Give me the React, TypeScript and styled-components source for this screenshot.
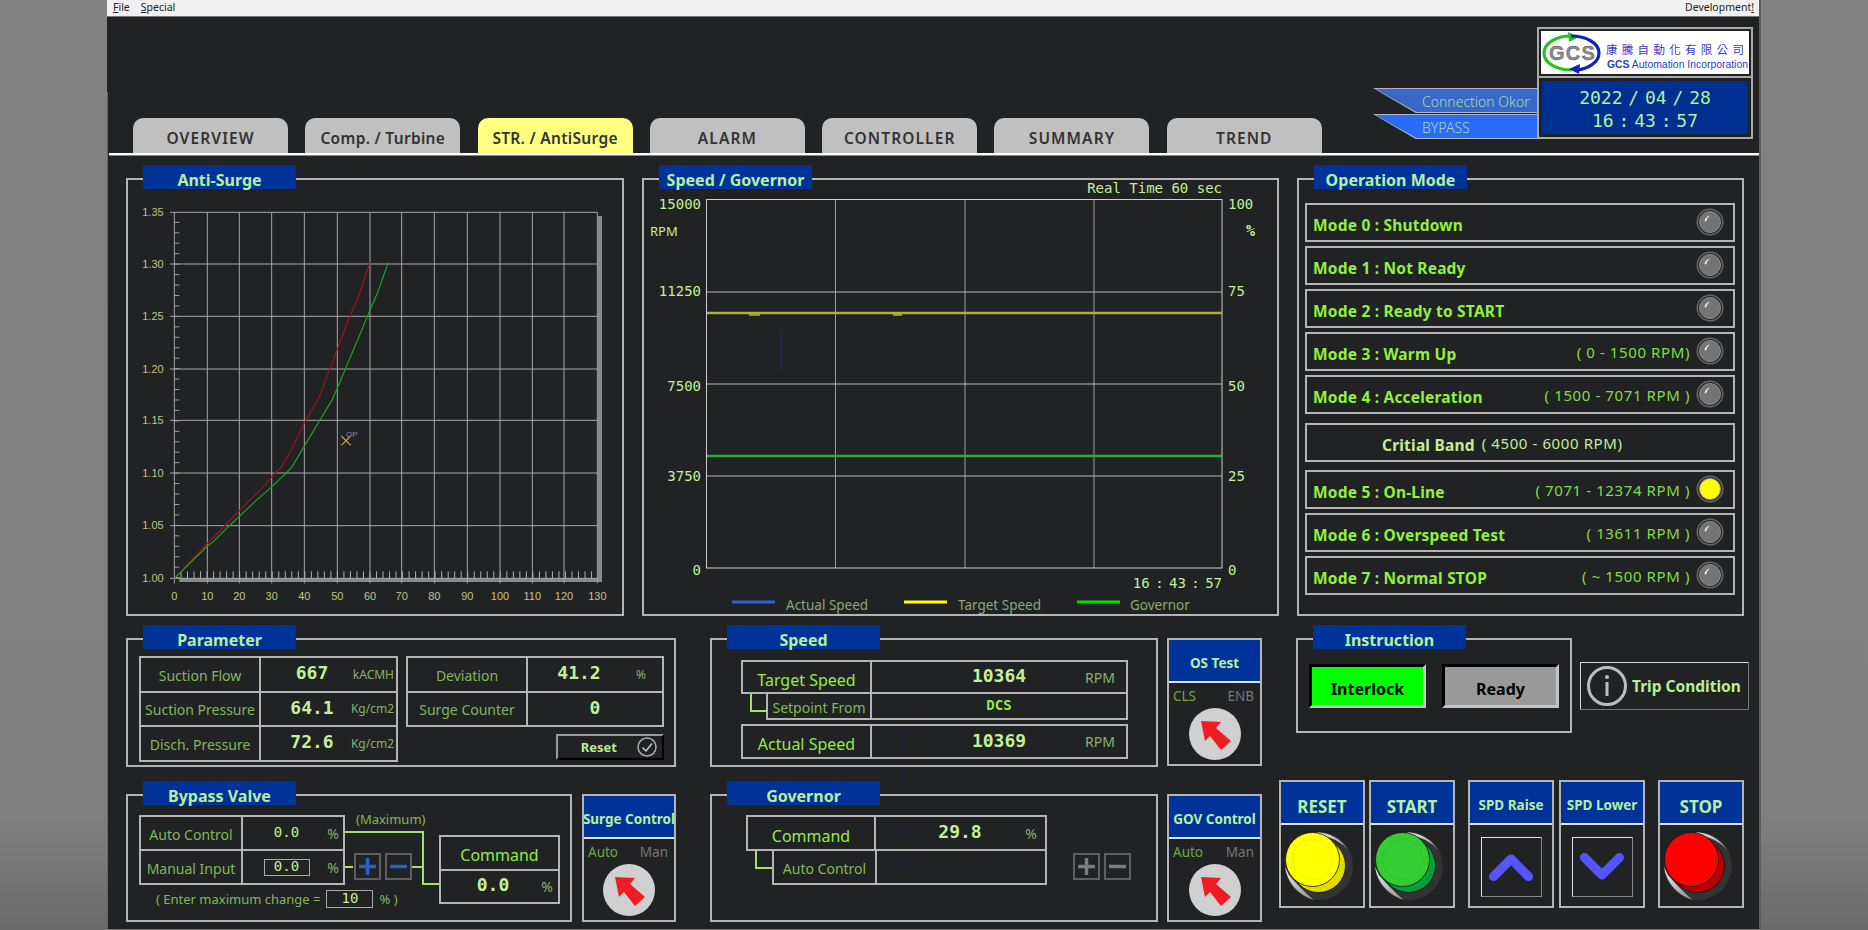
import React from "react";
import styled, { createGlobalStyle } from "styled-components";

const SANS = `"Noto Sans", "Open Sans", sans-serif`;
const MONO = `"DejaVu Sans Mono", "Liberation Mono", monospace`;
const BG = "#212224";
const LINE = "#b4b4b4";
const NAVY = "#003399";

const Global = createGlobalStyle`
  html, body { margin: 0; padding: 0; height: 930px; overflow: hidden; }
  body { background: linear-gradient(#828282 0, #808080 88%, #6a6a6a 100%); font-family: ${SANS}; }
  #root { height: 930px; }
`;

const Frame = styled.div`
  position: relative;
  width: 1654px;
  height: 930px;
  margin-left: 107px;
  background: ${BG};
  display: flex;
  flex-direction: column;
  box-sizing: border-box;
  border-right: 2px solid #5c5c5c;
  border-bottom: 1px solid #777;
  &::before {
    content: "";
    position: absolute;
    left: 0;
    top: 92px;
    bottom: 0;
    width: 1px;
    background: #666;
  }
`;
const Menu = styled.div`
  background: #f0f0f0;
  border-bottom: 1px solid #777;
  display: flex;
  align-items: center;
  padding: 0 5px 2px 6px;
  box-sizing: content-box;
  height: 14px;
  gap: 11px;
  font-size: 10.5px;
  color: #222;
`;
const MenuEnd = styled.span`
  margin-left: auto;
`;
const Header = styled.div`
  height: 136px;
  display: flex;
  justify-content: space-between;
  align-items: flex-end;
`;
const Tabs = styled.div`
  display: flex;
  gap: 17.3px;
  padding-left: 26px;
`;
const Tab = styled.div<{ $active?: boolean; $caps?: boolean }>`
  width: 155px;
  height: 35px;
  box-sizing: border-box;
  padding-top: 9px;
  text-align: center;
  background: ${(p) => (p.$active ? "#ffff80" : "#c0c0c0")};
  border-radius: 10px 10px 0 0;
  color: #333;
  font-size: 15.5px;
  line-height: 22px;
  font-weight: 600;
  letter-spacing: ${(p) => (p.$caps ? "1.1px" : "0.3px")};
`;
const HeaderRight = styled.div`
  display: flex;
  align-items: flex-end;
  padding: 0 6px 14px 0;
`;
const Ribbons = styled.div`
  display: flex;
  flex-direction: column;
  gap: 1px;
`;
const RibbonEdge = styled.div`
  width: 164px;
  height: 25px;
  padding: 1px 0 1px 1px;
  box-sizing: border-box;
  background: #aeb4c0;
  clip-path: polygon(0 0, 100% 0, 100% 100%, 26% 100%);
`;
const RibbonFill = styled.div<{ $color: string }>`
  height: 100%;
  background: ${(p) => p.$color};
  clip-path: polygon(1% 0, 100% 0, 100% 100%, 26% 100%);
  padding-left: 48px;
  box-sizing: border-box;
  color: #a8dca8;
  font-size: 14px;
  line-height: 25px;
  font-weight: 300;
`;
const ClockStack = styled.div`
  width: 216px;
  display: flex;
  flex-direction: column;
`;
const LogoBox = styled.div`
  height: 51px;
  box-sizing: border-box;
  border: 2px solid #aaa;
  padding: 2px;
  display: flex;
`;
const DateBox = styled.div`
  height: 61px;
  box-sizing: border-box;
  border: 2px solid #aaa;
  border-top: none;
  padding: 3px 3px 3px;
  display: flex;
`;
const DateFill = styled.div`
  flex: 1;
  background: #002f92;
  color: #b4f0a0;
  font-family: ${MONO};
  font-size: 18px;
  line-height: 23px;
  text-align: center;
  padding-top: 5px;
`;
const DateLine = styled.div<{ $ws: number }>`
  word-spacing: ${(p) => p.$ws}px;
`;
const Rule = styled.div`
  height: 2px;
  margin-left: 2px;
  background: #fff;
  border-bottom: 1px solid #888;
`;
const Content = styled.div`
  padding: 22px 0 0 19px;
  display: flex;
  flex-direction: column;
  gap: 22px;
`;
const TopRow = styled.div`
  display: flex;
  gap: 18px;
`;
const Panel = styled.div<{ $w: number; $h: number }>`
  position: relative;
  width: ${(p) => p.$w}px;
  height: ${(p) => p.$h}px;
  box-sizing: border-box;
  border: 2px solid ${LINE};
  flex: none;
`;
const PanelTitle = styled.div`
  position: absolute;
  left: 15px;
  top: -15px;
  width: 153px;
  height: 24px;
  box-sizing: border-box;
  padding-top: 1px;
  background: ${NAVY};
  color: #b4f0a0;
  font-size: 16px;
  line-height: 28px;
  font-weight: 700;
  text-align: center;
`;
const Chart = styled.svg`
  display: block;
`;
const ModeList = styled.div`
  padding: 23px 0 0 6px;
  display: flex;
  flex-direction: column;
  gap: 4px;
`;
const ModeRow = styled.div<{ $gap?: boolean }>`
  width: 430px;
  height: 39px;
  box-sizing: border-box;
  border: 2px solid ${LINE};
  margin: ${(p) => (p.$gap ? "5px 0 4px" : "0")};
  display: flex;
  align-items: center;
  padding: 0 9px 0 6px;
`;
const ModeLabel = styled.span<{ $pad?: number; $pale?: boolean }>`
  font-size: 15.5px;
  font-weight: 700;
  color: ${(p) => (p.$pale ? "#c4ec98" : "#92f040")};
  padding: 4px 0 0 ${(p) => p.$pad ?? 0}px;
  letter-spacing: 0.2px;
  white-space: nowrap;
`;
const ModeRange = styled.span<{ $pale?: boolean; $left?: boolean }>`
  margin-left: ${(p) => (p.$left ? "7px" : "auto")};
  margin-right: ${(p) => (p.$left ? "0" : "6px")};
  font-size: 15px;
  letter-spacing: 0.6px;
  color: ${(p) => (p.$pale ? "#c4ec98" : "#84dc44")};
  white-space: nowrap;
`;
const LedSlot = styled.svg<{ $end?: boolean }>`
  flex: none;
  margin-left: ${(p) => (p.$end ? "auto" : "0")};
  margin-top: -1px;
`;
const Lower = styled.div`
  display: flex;
`;
const Column = styled.div<{ $w: number; $gap: number; $ml: number }>`
  width: ${(p) => p.$w}px;
  margin-left: ${(p) => p.$ml}px;
  display: flex;
  flex-direction: column;
  gap: ${(p) => p.$gap}px;
  flex: none;
`;
const Split = styled.div<{ $gap: number }>`
  display: flex;
  align-items: flex-start;
  gap: ${(p) => p.$gap}px;
`;
const ParamBody = styled.div`
  display: flex;
  gap: 8px;
  padding: 16px 0 0 11px;
`;
const ParamRight = styled.div`
  display: flex;
  flex-direction: column;
`;
const Grid = styled.div<{ $cols: string; $w: number; $rowH: number; $indent?: number }>`
  display: grid;
  grid-template-columns: ${(p) => p.$cols};
  grid-auto-rows: ${(p) => p.$rowH}px;
  gap: 2px;
  padding: 2px;
  background: ${LINE};
  width: ${(p) => p.$w}px;
  margin-left: ${(p) => p.$indent ?? 0}px;
  box-sizing: border-box;
`;
const LabelCell = styled.div<{ $size?: number; $bright?: boolean }>`
  background: ${BG};
  display: flex;
  align-items: center;
  justify-content: center;
  padding-top: ${(p) => (p.$bright ? 5 : 2)}px;
  box-sizing: border-box;
  font-size: ${(p) => p.$size ?? 14}px;
  color: ${(p) => (p.$bright ? "#92ec48" : "#86b65a")};
  white-space: nowrap;
`;
const ValueCell = styled.div<{ $vw: number }>`
  background: ${BG};
  display: grid;
  grid-template-columns: 1fr;
  align-items: center;
  & > * {
    grid-area: 1 / 1;
  }
  & > :first-child {
    width: ${(p) => p.$vw}px;
  }
`;
const Value = styled.div<{ $size?: number; $thin?: boolean; $bright?: boolean }>`
  font-family: ${MONO};
  font-size: ${(p) => p.$size ?? 18}px;
  font-weight: ${(p) => (p.$thin ? 400 : 700)};
  color: ${(p) => (p.$bright ? "#92ec48" : "#c4f098")};
  text-align: center;
  margin-top: -3px;
`;
const Unit = styled.div<{ $pr?: number; $size?: number }>`
  justify-self: end;
  padding-right: ${(p) => p.$pr ?? 2}px;
  font-size: ${(p) => p.$size ?? 12}px;
  color: #8ab070;
  white-space: nowrap;
`;
const ResetButton = styled.div`
  align-self: flex-end;
  margin-top: 7px;
  width: 108px;
  height: 26px;
  box-sizing: border-box;
  border-top: 2px solid #9a9a9a;
  border-left: 2px solid #9a9a9a;
  border-right: 2px solid #000;
  border-bottom: 2px solid #000;
  display: flex;
  align-items: center;
  justify-content: flex-end;
  gap: 20px;
  padding-right: 5px;
  color: #b8ec98;
  font-size: 13px;
  font-weight: 700;
`;
const BypassBody = styled.div`
  display: flex;
  padding: 19px 0 0 11px;
`;
const BypassLeft = styled.div`
  width: 206px;
  flex: none;
`;
const EnterLine = styled.div`
  display: flex;
  align-items: center;
  gap: 6px;
  margin: 5px 0 0 17px;
  font-size: 13px;
  color: #86b65a;
  white-space: nowrap;
`;
const InputBox = styled.div<{ $w: number; $h: number }>`
  flex: none;
  width: ${(p) => p.$w}px;
  height: ${(p) => p.$h}px;
  box-sizing: border-box;
  border: 1px solid #aaa;
  font-family: ${MONO};
  font-size: 14px;
  line-height: ${(p) => p.$h - 4}px;
  color: #c4f098;
  text-align: center;
`;
const BoxCell = styled.div`
  display: flex;
  justify-content: center;
`;
const WireArea = styled.div`
  position: relative;
  width: 94px;
  height: 70px;
  flex: none;
`;
const Wires = styled.svg`
  position: absolute;
  left: 0;
  top: 0;
`;
const MaxLabel = styled.div`
  position: relative;
  margin: -4px 0 0 11px;
  height: 17px;
  font-size: 13px;
  line-height: 17px;
  color: #86b65a;
`;
const PmRow = styled.div<{ $flow?: boolean }>`
  position: relative;
  display: flex;
  gap: 4px;
  margin: ${(p) => (p.$flow ? "38px 0 0 26px" : "25px 0 0 8.5px")};
`;
const PmBox = styled.div`
  width: 27px;
  height: 27px;
  box-sizing: border-box;
  border: 2px solid #5f5f5f;
  display: flex;
  align-items: center;
  justify-content: center;
`;
const CommandWrap = styled.div`
  margin-top: 20px;
`;
const SpeedBody = styled.div`
  padding: 20px 0 0 29px;
`;
const Indented = styled.div`
  position: relative;
  margin-top: -2px;
  &::before {
    content: "";
    position: absolute;
    left: 9px;
    top: 2px;
    width: 15px;
    height: 16px;
    border-left: 2px solid #a4e070;
    border-bottom: 2px solid #a4e070;
  }
`;
const Spaced = styled.div`
  margin-top: 4px;
`;
const GovBody = styled.div`
  display: flex;
  padding: 19px 0 0 34px;
`;
const Selector = styled.div<{ $w: number }>`
  width: ${(p) => p.$w}px;
  height: 128px;
  box-sizing: border-box;
  border: 2px solid ${LINE};
  flex: none;
  display: flex;
  flex-direction: column;
`;
const SelectorHead = styled.div<{ $size?: number }>`
  height: 43px;
  flex: none;
  box-sizing: border-box;
  background: ${NAVY};
  border-bottom: 2px solid #dfe6f0;
  color: #b4f0a0;
  font-size: ${(p) => p.$size ?? 13.5}px;
  font-weight: 700;
  display: flex;
  align-items: center;
  justify-content: center;
  white-space: nowrap;
  padding-top: 4px;
`;
const ActionHead = styled(SelectorHead)`
  padding-top: 7px;
`;
const SelectorSides = styled.div`
  display: flex;
  justify-content: space-between;
  padding: 4px 6px 0 4px;
  font-size: 13.5px;
  line-height: 18px;
`;
const SideOn = styled.span`
  color: #6ea83e;
`;
const SideOff = styled.span`
  color: #777;
`;
const KnobWrap = styled.div`
  display: flex;
  justify-content: center;
  margin-top: 3px;
`;
const InstructionRow = styled.div`
  display: flex;
  align-items: flex-start;
  margin-left: 17px;
`;
const InstructionBody = styled.div`
  display: flex;
  gap: 16px;
  padding: 24px 0 0 11px;
`;
const Lamp = styled.div<{ $color: string }>`
  width: 117px;
  height: 44px;
  box-sizing: border-box;
  background: ${(p) => p.$color};
  border-top: 3px solid #000;
  border-left: 3px solid #000;
  border-right: 3px solid #c4c4c4;
  border-bottom: 3px solid #c4c4c4;
  color: #000;
  font-size: 16px;
  font-weight: 700;
  text-align: center;
  line-height: 44px;
`;
const Trip = styled.div`
  margin: 24px 0 0 8px;
  width: 169px;
  height: 48px;
  box-sizing: border-box;
  border: 1px solid;
  border-color: #d8d8d8 #777 #777 #d8d8d8;
  display: flex;
  align-items: center;
  gap: 5px;
  padding-left: 6px;
  color: #b8f090;
  font-size: 15.5px;
  font-weight: 700;
  white-space: nowrap;
`;
const ButtonRow = styled.div`
  display: flex;
  margin-top: -1px;
`;
const ActionBox = styled.div<{ $ml: number }>`
  width: 86px;
  height: 128px;
  box-sizing: border-box;
  border: 2px solid ${LINE};
  margin-left: ${(p) => p.$ml}px;
  flex: none;
  display: flex;
  flex-direction: column;
`;
const ArrowWrap = styled.div`
  display: flex;
  justify-content: center;
  padding-top: 12px;
`;
const ArrowFrame = styled.div`
  width: 61px;
  height: 60px;
  box-sizing: border-box;
  border: 1px solid;
  border-color: #e4e4e4 #888 #888 #e4e4e4;
  display: flex;
  align-items: center;
  justify-content: center;
`;
const Trace = styled.svg`
  position: absolute;
  left: 797px;
  top: 700px;
  pointer-events: none;
`;

const SURGE_X = [163, 262, 358, 455, 553, 652, 750, 845, 943, 1042, 1140, 1237, 1332, 1432];
const SURGE_Y = [157, 312, 469, 627, 781, 939, 1097, 1255];
const RED = "163,1255 262,1150 285,1128 360,1050 440,970 455,950 485,920 515,868 552,790 575,752 598,710 630,625 652,568 685,480 715,410 750,307";
const GREEN = "163,1255 262,1158 280,1145 325,1100 405,1025 450,985 498,940 515,922 552,860 600,780 635,722 652,685 685,605 715,535 750,450 772,400 805,307";

function SurgeChart() {
  const leftTicks: number[] = [];
  for (let y = 187; y < 1255; y += 31.35) leftTicks.push(y);
  const baseTicks: number[] = [];
  for (let x = 183; x < 1432; x += 19.55) baseTicks.push(x);
  const yLabels = ["1.35", "1.30", "1.25", "1.20", "1.15", "1.10", "1.05", "1.00"];
  const labelStyle = { fontFamily: "Liberation Sans, sans-serif", fontSize: 33, fill: "#c2c284" };
  return (
    <Chart width={494} height={434} viewBox="24 60 1482 1302">
      <rect x={178} y={1255} width={1268} height={11} fill="#8a8a8a" />
      <rect x={1434} y={168} width={12} height={1098} fill="#8a8a8a" />
      {SURGE_X.map((x) => (
        <line key={x} x1={x} x2={x} y1={157} y2={1270} stroke="#a4a4a4" strokeWidth={3} />
      ))}
      {SURGE_Y.map((y) => (
        <line key={y} x1={150} x2={1432} y1={y} y2={y} stroke="#a8a8a8" strokeWidth={3} />
      ))}
      {leftTicks.map((y) => (
        <line key={y} x1={163} x2={178} y1={y} y2={y} stroke="#a0a0a0" strokeWidth={3} />
      ))}
      {baseTicks.map((x) => (
        <line key={x} x1={x} x2={x} y1={1234} y2={1255} stroke="#b0b0b0" strokeWidth={3} />
      ))}
      <polyline points={RED} fill="none" stroke="#a41218" strokeWidth={3.5} />
      <polyline points={GREEN} fill="none" stroke="#1fa32a" strokeWidth={3.5} />
      <path d="M664 828 L692 856 M692 828 L664 856" stroke="#c4ac38" strokeWidth={3.5} />
      <text x={678} y={832} fontFamily="Liberation Sans, sans-serif" fontSize={24} fill="#8a8fa0">OP</text>
      {yLabels.map((t, i) => (
        <text key={t} x={131} y={SURGE_Y[i] + 11} textAnchor="end" {...labelStyle}>{t}</text>
      ))}
      {SURGE_X.map((x, i) => (
        <text key={x} x={x} y={1321} textAnchor="middle" {...labelStyle}>{i * 10}</text>
      ))}
    </Chart>
  );
}

function SpeedChart() {
  const mono = { fontFamily: "DejaVu Sans Mono, monospace", fontSize: 14, fill: "#c4f098" };
  const sans = { fontFamily: "Noto Sans, sans-serif", fontSize: 13.5, fill: "#8aa87a" };
  const ys = [
    ["15000", "100", 204],
    ["11250", "75", 291],
    ["7500", "50", 386],
    ["3750", "25", 476],
    ["0", "0", 570],
  ] as const;
  return (
    <Chart width={633} height={434} viewBox="644 180 633 434">
      {[835.5, 965, 1094].map((x) => (
        <line key={x} x1={x} x2={x} y1={199} y2={568} stroke="#9c9c9c" strokeWidth={1} />
      ))}
      {[292, 384, 476].map((y) => (
        <line key={y} x1={706} x2={1222} y1={y} y2={y} stroke="#b8b8b8" strokeWidth={1} />
      ))}
      <rect x={706.5} y={199.5} width={515.5} height={368.5} fill="none" stroke="#cfcfcf" strokeWidth={1} />
      <line x1={781} x2={781} y1={331} y2={372} stroke="#14306e" strokeWidth={1} />
      <line x1={707} x2={1222} y1={313} y2={313} stroke="#b0b034" strokeWidth={2.5} />
      <line x1={749} x2={760} y1={315} y2={315} stroke="#ffff20" strokeWidth={1} />
      <line x1={893} x2={902} y1={315} y2={315} stroke="#ffff20" strokeWidth={1} />
      <line x1={707} x2={1222} y1={456} y2={456} stroke="#28b030" strokeWidth={2.5} />
      {ys.map(([l, r, y]) => (
        <React.Fragment key={l}>
          <text x={701} y={y + 5} textAnchor="end" {...mono}>{l}</text>
          <text x={1228} y={y + 5} {...mono}>{r}</text>
        </React.Fragment>
      ))}
      <text x={650} y={236} fontFamily="Noto Sans, sans-serif" fontSize={13} fill="#c4f098">RPM</text>
      <text x={1246} y={236} fontFamily="DejaVu Sans Mono, monospace" fontWeight={700} fontSize={15} fill="#c4f098">%</text>
      <text x={1222} y={193} textAnchor="end" {...mono}>Real Time 60 sec</text>
      <text x={1222} y={588} textAnchor="end" wordSpacing={-3} {...mono}>16 : 43 : 57</text>
      <line x1={732} x2={775} y1={602} y2={602} stroke="#2a62d8" strokeWidth={3} />
      <text x={786} y={610} {...sans}>Actual Speed</text>
      <line x1={904} x2={947} y1={602} y2={602} stroke="#ffff00" strokeWidth={3} />
      <text x={958} y={610} {...sans}>Target Speed</text>
      <line x1={1077} x2={1120} y1={602} y2={602} stroke="#00dd00" strokeWidth={3} />
      <text x={1130} y={610} {...sans}>Governor</text>
    </Chart>
  );
}

function Led({ on, end }: { on?: boolean; end?: boolean }) {
  return (
    <LedSlot $end={end} width={28} height={28} viewBox="0 0 28 28">
      <circle cx={14} cy={14} r={13.5} fill="#666" />
      <circle cx={14} cy={14} r={12} fill="#262626" />
      <circle cx={14} cy={14} r={10.5} fill={on ? "#ffff00" : "#747474"} stroke={on ? "#999" : "#8a8a8a"} />
      {!on && <path d="M8.5 13 Q9.5 8.5 14 7.5 Q10.5 10 10 13.5 Z" fill="#f2f2f2" />}
    </LedSlot>
  );
}

function Knob() {
  return (
    <svg width={52} height={52} viewBox="-26 -26 52 52">
      <circle r={26} fill="#d0d0d0" />
      <polygon points="-14,-13 6,-12 1,-6 16,7 6,16 -5,2 -10,7" fill="#ee1c25" />
    </svg>
  );
}

function PlusIcon({ color }: { color: string }) {
  return (
    <svg width={19} height={19} viewBox="0 0 19 19">
      <path d="M9.5 1 V18 M1 9.5 H18" stroke={color} strokeWidth={3.5} />
    </svg>
  );
}
function MinusIcon({ color }: { color: string }) {
  return (
    <svg width={19} height={19} viewBox="0 0 19 19">
      <path d="M1 9.5 H18" stroke={color} strokeWidth={3.5} />
    </svg>
  );
}

function Mushroom({ top, mid, ring }: { top: string; mid: string; ring: string }) {
  return (
    <svg width={82} height={80} viewBox="0 0 82 80">
      <defs>
        <linearGradient id={`s${ring.slice(1)}`} x1="0" y1="0" x2="1" y2="1">
          <stop offset="0" stopColor="#f0f0f0" />
          <stop offset="1" stopColor="#8c8c8c" />
        </linearGradient>
      </defs>
      <circle cx={38} cy={41} r={34} fill="#333" />
      <path d="M36 7.2 Q56 8 67.5 25.5 Q56 12 40 11 Z" fill={`url(#s${ring.slice(1)})`} />
      <path d="M4 42 Q8 66 32.5 75 Q18 62 8 50 Z" fill={`url(#s${ring.slice(1)})`} />
      <circle cx={37.5} cy={40.5} r={27} fill={mid} stroke="#111" strokeWidth={0.8} />
      <circle cx={31.5} cy={34.5} r={27} fill={top} stroke="#111" strokeWidth={0.8} />
      <circle cx={31.5} cy={34.5} r={20} fill="none" stroke={ring} strokeWidth={0.6} />
    </svg>
  );
}

function Logo() {
  return (
    <svg width={208} height={43} viewBox="0 0 208 43" style={{ background: "#fff", display: "block" }}>
      <path d="M30 5 C14 5 3 13 3 22 C3 33 17 39 31 39" fill="none" stroke="#22c41e" strokeWidth={3.2} />
      <path d="M27 1 L38 6 L28 11 Z" fill="#22c41e" />
      <path d="M30 5 C45 5 58 12 58 22 C58 32 46 38 36 39" fill="none" stroke="#1220c0" strokeWidth={3.2} />
      <path d="M39 33 L28 38 L38 43 Z" fill="#1220c0" />
      <text x={8} y={29} fontFamily="Liberation Sans, sans-serif" fontWeight={700} fontSize={20} fill="#8c8c8c" stroke="#555" strokeWidth={0.4} letterSpacing={1.2}>GCS</text>
      <text x={65} y={23} fontFamily="Noto Sans CJK TC, sans-serif" fontSize={11.5} fill="#3a3ac8" letterSpacing={4.3}>康騰自動化有限公司</text>
      <text x={66} y={37} fontFamily="Liberation Sans, sans-serif" fontSize={10} fill="#2a40c8" textLength={141} lengthAdjust="spacingAndGlyphs"><tspan fontWeight={700}>GCS</tspan> Automation Incorporation</text>
    </svg>
  );
}

const modes: [string, string, boolean?][] = [
  ["Mode 0 : Shutdown", ""],
  ["Mode 1 : Not Ready", ""],
  ["Mode 2 : Ready to START", ""],
  ["Mode 3 : Warm Up", "( 0 - 1500 RPM)"],
  ["Mode 4 : Acceleration", "( 1500 - 7071 RPM )"],
];
const modesB: [string, string, boolean?][] = [
  ["Mode 5 : On-Line", "( 7071 - 12374 RPM )", true],
  ["Mode 6 : Overspeed Test", "( 13611 RPM )"],
  ["Mode 7 : Normal STOP", "( ~ 1500 RPM )"],
];
const tabs = ["OVERVIEW", "Comp. / Turbine", "STR. / AntiSurge", "ALARM", "CONTROLLER", "SUMMARY", "TREND"];

function ModeLine({ m }: { m: [string, string, boolean?] }) {
  return (
    <ModeRow>
      <ModeLabel>{m[0]}</ModeLabel>
      {m[1] && <ModeRange>{m[1]}</ModeRange>}
      <Led on={m[2]} end={!m[1]} />
    </ModeRow>
  );
}

function SelectorBox({ w, title, a, b }: { w: number; title: string; a: string; b: string }) {
  return (
    <Selector $w={w}>
      <SelectorHead>{title}</SelectorHead>
      <SelectorSides>
        <SideOn>{a}</SideOn>
        <SideOff>{b}</SideOff>
      </SelectorSides>
      <KnobWrap><Knob /></KnobWrap>
    </Selector>
  );
}

export default function App() {
  return (
    <>
      <Global />
      <Frame>
        <Menu>
          <span><u>F</u>ile</span>
          <span><u>S</u>pecial</span>
          <MenuEnd>Development<u>!</u></MenuEnd>
        </Menu>
        <Header>
          <Tabs>
            {tabs.map((t, i) => (
              <Tab key={t} $active={i === 2} $caps={t === t.toUpperCase()}>{t}</Tab>
            ))}
          </Tabs>
          <HeaderRight>
            <Ribbons>
              <RibbonEdge><RibbonFill $color="#3a68c8">Connection Okor</RibbonFill></RibbonEdge>
              <RibbonEdge><RibbonFill $color="#2a6cf5">BYPASS</RibbonFill></RibbonEdge>
            </Ribbons>
            <ClockStack>
              <LogoBox><Logo /></LogoBox>
              <DateBox>
                <DateFill>
                  <DateLine $ws={-5}>2022 / 04 / 28</DateLine>
                  <DateLine $ws={-6}>16 : 43 : 57</DateLine>
                </DateFill>
              </DateBox>
            </ClockStack>
          </HeaderRight>
        </Header>
        <Rule />
        <Content>
          <TopRow>
            <Panel $w={498} $h={438}>
              <PanelTitle>Anti-Surge</PanelTitle>
              <SurgeChart />
            </Panel>
            <Panel $w={637} $h={438}>
              <PanelTitle>Speed / Governor</PanelTitle>
              <SpeedChart />
            </Panel>
            <Panel $w={447} $h={438}>
              <PanelTitle>Operation Mode</PanelTitle>
              <ModeList>
                {modes.map((m) => <ModeLine key={m[0]} m={m} />)}
                <ModeRow $gap>
                  <ModeLabel $pad={69} $pale>Critial Band</ModeLabel>
                  <ModeRange $left $pale>( 4500 - 6000 RPM)</ModeRange>
                </ModeRow>
                {modesB.map((m) => <ModeLine key={m[0]} m={m} />)}
              </ModeList>
            </Panel>
          </TopRow>
          <Lower>
            <Column $w={550} $gap={27} $ml={0}>
              <Panel $w={550} $h={129}>
                <PanelTitle>Parameter</PanelTitle>
                <ParamBody>
                  <Grid $cols="118px 1fr" $w={259} $rowH={32.5}>
                    <LabelCell>Suction Flow</LabelCell>
                    <ValueCell $vw={102}><Value>667</Value><Unit>kACMH</Unit></ValueCell>
                    <LabelCell>Suction Pressure</LabelCell>
                    <ValueCell $vw={102}><Value>64.1</Value><Unit>Kg/cm2</Unit></ValueCell>
                    <LabelCell>Disch. Pressure</LabelCell>
                    <ValueCell $vw={102}><Value>72.6</Value><Unit>Kg/cm2</Unit></ValueCell>
                  </Grid>
                  <ParamRight>
                    <Grid $cols="118px 1fr" $w={258} $rowH={32.5}>
                      <LabelCell>Deviation</LabelCell>
                      <ValueCell $vw={102}><Value>41.2</Value><Unit $pr={16}>%</Unit></ValueCell>
                      <LabelCell>Surge Counter</LabelCell>
                      <ValueCell $vw={134}><Value>0</Value><Unit /></ValueCell>
                    </Grid>
                    <ResetButton>
                      Reset
                      <svg width={20} height={20} viewBox="0 0 20 20">
                        <circle cx={10} cy={10} r={9} fill="none" stroke="#aaa" strokeWidth={1.5} />
                        <path d="M5.5 10.5 L9 14 L15 6.5" fill="none" stroke="#ccc" strokeWidth={1.5} />
                      </svg>
                    </ResetButton>
                  </ParamRight>
                </ParamBody>
              </Panel>
              <Split $gap={10}>
                <Panel $w={446} $h={128}>
                  <PanelTitle>Bypass Valve</PanelTitle>
                  <BypassBody>
                    <BypassLeft>
                      <Grid $cols="100px 1fr" $w={206} $rowH={32}>
                        <LabelCell>Auto Control</LabelCell>
                        <ValueCell $vw={87}><Value $size={14} $thin>0.0</Value><Unit $pr={4} $size={14}>%</Unit></ValueCell>
                        <LabelCell>Manual Input</LabelCell>
                        <ValueCell $vw={87}>
                          <BoxCell><InputBox $w={46} $h={17}>0.0</InputBox></BoxCell>
                          <Unit $pr={4} $size={14}>%</Unit>
                        </ValueCell>
                      </Grid>
                      <EnterLine>
                        ( Enter maximum change =
                        <InputBox $w={47} $h={18}>10</InputBox>
                        % )
                      </EnterLine>
                    </BypassLeft>
                    <WireArea>
                      <Wires width={94} height={71} viewBox="0 0 94 71">
                        <path d="M0 17 H78 V69 H94 M0 52 H8 M65 52 H78" fill="none" stroke="#a4e070" strokeWidth={2} />
                      </Wires>
                      <MaxLabel>(Maximum)</MaxLabel>
                      <PmRow>
                        <PmBox><PlusIcon color="#2f5fc4" /></PmBox>
                        <PmBox><MinusIcon color="#2f5fc4" /></PmBox>
                      </PmRow>
                    </WireArea>
                    <CommandWrap>
                      <Grid $cols="1fr" $w={121} $rowH={31.5}>
                        <LabelCell $size={16} $bright>Command</LabelCell>
                        <ValueCell $vw={104}><Value>0.0</Value><Unit $pr={5} $size={14}>%</Unit></ValueCell>
                      </Grid>
                    </CommandWrap>
                  </BypassBody>
                </Panel>
                <SelectorBox w={94} title="Surge Control" a="Auto" b="Man" />
              </Split>
            </Column>
            <Column $w={552} $gap={27} $ml={34}>
              <Split $gap={9}>
                <Panel $w={448} $h={129}>
                  <PanelTitle>Speed</PanelTitle>
                  <SpeedBody>
                    <Grid $cols="127px 1fr" $w={387} $rowH={30}>
                      <LabelCell $size={16} $bright>Target Speed</LabelCell>
                      <ValueCell $vw={254}><Value>10364</Value><Unit $pr={11} $size={14}>RPM</Unit></ValueCell>
                    </Grid>
                    <Indented>
                      <Grid $cols="102px 1fr" $w={362} $rowH={24} $indent={25}>
                        <LabelCell>Setpoint From</LabelCell>
                        <ValueCell $vw={254}><Value $size={14} $bright>DCS</Value><Unit /></ValueCell>
                      </Grid>
                    </Indented>
                    <Spaced>
                      <Grid $cols="127px 1fr" $w={387} $rowH={31}>
                        <LabelCell $size={16} $bright>Actual Speed</LabelCell>
                        <ValueCell $vw={254}><Value>10369</Value><Unit $pr={11} $size={14}>RPM</Unit></ValueCell>
                      </Grid>
                    </Spaced>
                  </SpeedBody>
                </Panel>
                <SelectorBox w={95} title="OS Test" a="CLS" b="ENB" />
              </Split>
              <Split $gap={9}>
                <Panel $w={448} $h={128}>
                  <PanelTitle>Governor</PanelTitle>
                  <GovBody>
                    <div>
                      <Grid $cols="126px 1fr" $w={301} $rowH={32}>
                        <LabelCell $size={16} $bright>Command</LabelCell>
                        <ValueCell $vw={168}><Value>29.8</Value><Unit $pr={8} $size={14}>%</Unit></ValueCell>
                      </Grid>
                      <Indented>
                        <Grid $cols="101px 1fr" $w={275} $rowH={32} $indent={26}>
                          <LabelCell>Auto Control</LabelCell>
                          <ValueCell $vw={94}><Unit /></ValueCell>
                        </Grid>
                      </Indented>
                    </div>
                    <PmRow $flow>
                      <PmBox><PlusIcon color="#7c7c7c" /></PmBox>
                      <PmBox><MinusIcon color="#7c7c7c" /></PmBox>
                    </PmRow>
                  </GovBody>
                </Panel>
                <SelectorBox w={95} title="GOV Control" a="Auto" b="Man" />
              </Split>
            </Column>
            <Column $w={475} $gap={48} $ml={17}>
              <InstructionRow>
                <Panel $w={276} $h={95}>
                  <PanelTitle>Instruction</PanelTitle>
                  <InstructionBody>
                    <Lamp $color="#00ff00">Interlock</Lamp>
                    <Lamp $color="#999999">Ready</Lamp>
                  </InstructionBody>
                </Panel>
                <Trip>
                  <svg width={40} height={40} viewBox="0 0 40 40">
                    <circle cx={20} cy={20} r={18.5} fill="none" stroke="#bdbdbd" strokeWidth={3} />
                    <circle cx={20} cy={11} r={2} fill="#bdbdbd" />
                    <path d="M20 16 V30" stroke="#bdbdbd" strokeWidth={3} />
                  </svg>
                  Trip Condition
                </Trip>
              </InstructionRow>
              <ButtonRow>
                <ActionBox $ml={0}>
                  <ActionHead $size={17}>RESET</ActionHead>
                  <Mushroom top="#ffff00" mid="#e0dc00" ring="#e8e800" />
                </ActionBox>
                <ActionBox $ml={4}>
                  <ActionHead $size={17}>START</ActionHead>
                  <Mushroom top="#33cc33" mid="#0a9e3a" ring="#2dbb2d" />
                </ActionBox>
                <ActionBox $ml={13}>
                  <SelectorHead>SPD Raise</SelectorHead>
                  <ArrowWrap>
                    <ArrowFrame>
                      <svg width={44} height={28} viewBox="0 0 44 28">
                        <path d="M4.5 23.5 L22 6 L39.5 23.5" fill="none" stroke="#5555ff" strokeWidth={9} strokeLinecap="round" strokeLinejoin="round" />
                      </svg>
                    </ArrowFrame>
                  </ArrowWrap>
                </ActionBox>
                <ActionBox $ml={5}>
                  <SelectorHead>SPD Lower</SelectorHead>
                  <ArrowWrap>
                    <ArrowFrame>
                      <svg width={44} height={28} viewBox="0 0 44 28">
                        <path d="M4.5 4.5 L22 22 L39.5 4.5" fill="none" stroke="#5555ff" strokeWidth={9} strokeLinecap="round" strokeLinejoin="round" />
                      </svg>
                    </ArrowFrame>
                  </ArrowWrap>
                </ActionBox>
                <ActionBox $ml={13}>
                  <ActionHead $size={17}>STOP</ActionHead>
                  <Mushroom top="#ff0000" mid="#b80000" ring="#e80000" />
                </ActionBox>
              </ButtonRow>
            </Column>
          </Lower>
        </Content>
        <Trace width={2} height={185} viewBox="0 0 2 185">
          <path d="M1 3 V16 M1 30 V57 M1 70 V85 M1 100 V112 M1 126 V140 M1 155 V175" stroke="#0c2454" strokeWidth={1} />
        </Trace>
      </Frame>
    </>
  );
}
